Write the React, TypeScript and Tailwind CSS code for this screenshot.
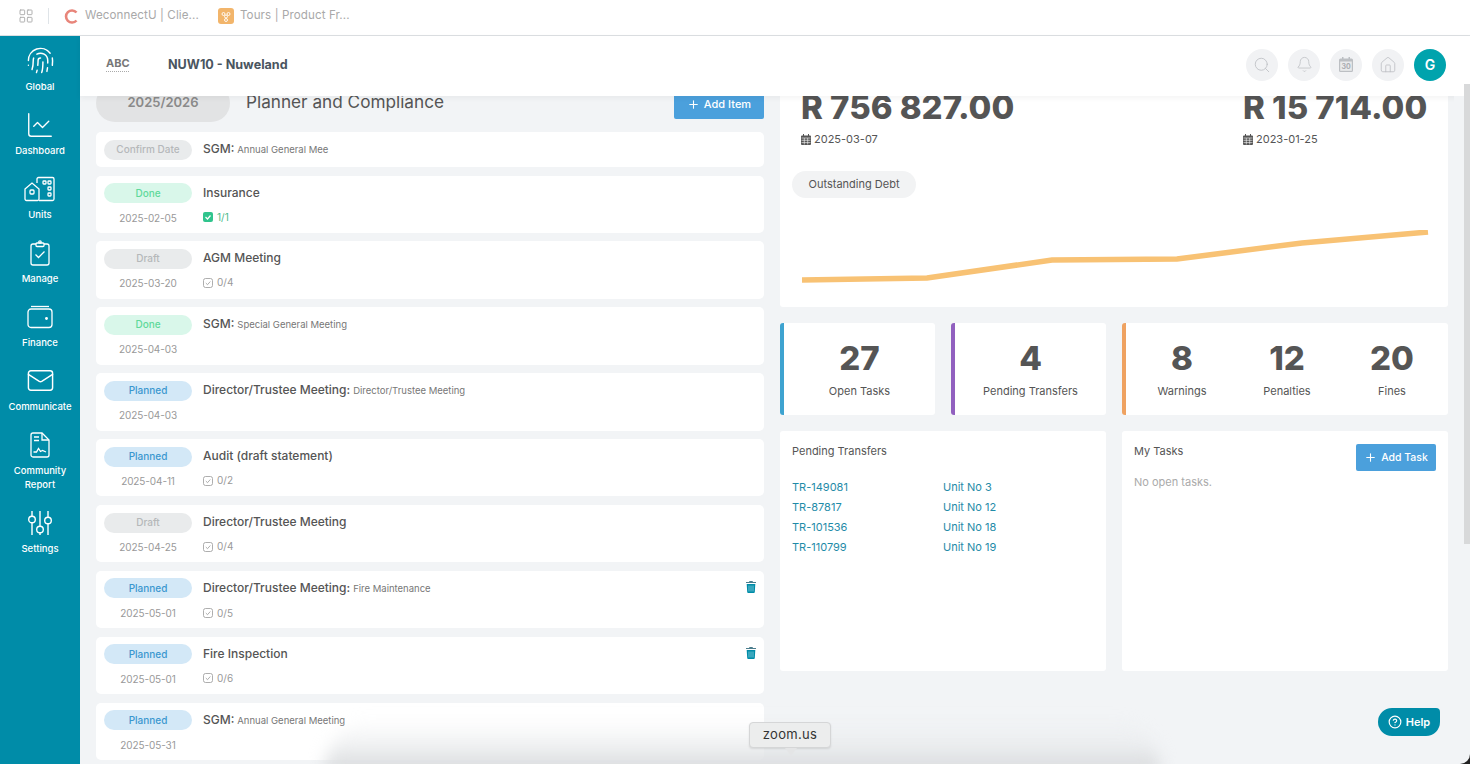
import { Plus, Search, Bell, Home, CircleHelp, LayoutGrid, Fingerprint, ChartLine, Mail } from "lucide-react";

function UnitsIcon() {
  return (
    <svg width="32" height="26" viewBox="0 0 32 26" fill="none" stroke="currentColor" strokeWidth="1.3">
      <path d="M1 13l7-6 7 6v10a1.5 1.5 0 0 1-1.5 1.5h-11A1.5 1.5 0 0 1 1 23z" />
      <rect x="6" y="14" width="4" height="4" rx="1" />
      <path d="M13 7V3a1.5 1.5 0 0 1 1.5-1.5h14A1.5 1.5 0 0 1 30 3v20a1.5 1.5 0 0 1-1.5 1.5H15" />
      <rect x="19" y="5" width="3" height="3" rx=".7" />
      <rect x="24" y="5" width="3" height="3" rx=".7" />
      <rect x="24" y="11" width="3" height="3" rx=".7" />
      <rect x="24" y="17" width="3" height="3" rx=".7" />
    </svg>
  );
}

function ManageIcon() {
  return (
    <svg width="20" height="26" viewBox="0 0 20 26" fill="none" stroke="currentColor" strokeWidth="1.3">
      <path d="M6 4H3a2 2 0 0 0-2 2v17a2 2 0 0 0 2 2h14a2 2 0 0 0 2-2V6a2 2 0 0 0-2-2h-3" />
      <rect x="6" y="3" width="8" height="3.5" rx="1" />
      <circle cx="10" cy="2" r="1.2" />
      <path d="M5.5 14.5l3 3 6-6" />
    </svg>
  );
}

function WalletIcon() {
  return (
    <svg width="26" height="24" viewBox="0 0 26 24" fill="none" stroke="currentColor" strokeWidth="1.3">
      <path d="M4 1.5h18" />
      <rect x="1" y="4" width="24" height="18.5" rx="3" />
      <circle cx="19.5" cy="13.5" r=".8" fill="currentColor" />
    </svg>
  );
}

function ReportIcon() {
  return (
    <svg width="20" height="26" viewBox="0 0 20 26" fill="none" stroke="currentColor" strokeWidth="1.3">
      <path d="M3 1h9l7 7v15a2 2 0 0 1-2 2H3a2 2 0 0 1-2-2V3a2 2 0 0 1 2-2z" />
      <path d="M12 1v7h7" />
      <path d="M4 5h5M4 8.500h5" />
      <path d="M3.500 20h3l2-3.500 2 3 2-1 3.500 1.500" />
    </svg>
  );
}

function SettingsIcon() {
  return (
    <svg width="24" height="26" viewBox="0 0 24 26" fill="none" stroke="currentColor" strokeWidth="1.4">
      <path d="M4 1v5M4 13v12M12 1v15M12 23v2M20 1v6M20 14v11" />
      <circle cx="4" cy="9.500" r="3.300" />
      <circle cx="12" cy="19.500" r="3.300" />
      <circle cx="20" cy="10.500" r="3.300" />
    </svg>
  );
}

function FilledCalendar() {
  return (
    <svg width="10" height="11" viewBox="0 0 10 11" className="shrink-0">
      <path fill="#555" d="M2 0h1v1.500h4V0h1v1.500h1a1 1 0 0 1 1 1V10a1 1 0 0 1-1 1H1a1 1 0 0 1-1-1V2.500a1 1 0 0 1 1-1h1z" />
      <path stroke="#fff" strokeWidth=".6" d="M.5 4h9M.5 6.300h9M.5 8.600h9M3.300 4v6.500M6.700 4v6.500" />
    </svg>
  );
}

function TrashIcon() {
  return (
    <svg width="10" height="12" viewBox="0 0 10 12" className="absolute right-[8px] top-[10px]">
      <path fill="#4b7d8d" d="M3.500 0h3l.5 1h3v1H0V1h3z" />
      <path fill="#008ca8" d="M.7 3h8.600l-.5 8a1 1 0 0 1-1 1H2.200a1 1 0 0 1-1-1z" />
      <path stroke="#8fd0de" strokeWidth=".8" d="M3 4.500v6M5 4.500v6M7 4.500v6" />
    </svg>
  );
}

const plannerRows = [
  { status: "Confirm Date", title: "SGM:", sub: "Annual General Mee", short: true },
  { status: "Done", title: "Insurance", date: "2025-02-05", tasks: "1/1", done: true },
  { status: "Draft", title: "AGM Meeting", date: "2025-03-20", tasks: "0/4" },
  { status: "Done", title: "SGM:", sub: "Special General Meeting", date: "2025-04-03" },
  { status: "Planned", title: "Director/Trustee Meeting:", sub: "Director/Trustee Meeting", date: "2025-04-03" },
  { status: "Planned", title: "Audit (draft statement)", date: "2025-04-11", tasks: "0/2" },
  { status: "Draft", title: "Director/Trustee Meeting", date: "2025-04-25", tasks: "0/4" },
  { status: "Planned", title: "Director/Trustee Meeting:", sub: "Fire Maintenance", date: "2025-05-01", tasks: "0/5", trash: true },
  { status: "Planned", title: "Fire Inspection", date: "2025-05-01", tasks: "0/6", trash: true },
  { status: "Planned", title: "SGM:", sub: "Annual General Meeting", date: "2025-05-31" },
];

const pillClass: Record<string, string> = {
  Done: "bg-[#d9f7ea] text-[#5fd99a]",
  Draft: "bg-[#e9ebec] text-[#b5b8ba]",
  "Confirm Date": "bg-[#e9ebec] text-[#b5b8ba]",
  Planned: "bg-[#d3e8f7] text-[#3a97cf]",
};

const transfers = [
  ["TR-149081", "Unit No 3"],
  ["TR-87817", "Unit No 12"],
  ["TR-101536", "Unit No 18"],
  ["TR-110799", "Unit No 19"],
];

const navItems = [
  { label: "Global", icon: <Fingerprint size={29} strokeWidth={1.2} /> },
  { label: "Dashboard", icon: <ChartLine size={30} strokeWidth={1.1} /> },
  { label: "Units", icon: <UnitsIcon /> },
  { label: "Manage", icon: <ManageIcon /> },
  { label: "Finance", icon: <WalletIcon /> },
  { label: "Communicate", icon: <Mail size={29} strokeWidth={1.2} /> },
  { label: "Community Report", icon: <ReportIcon /> },
  { label: "Settings", icon: <SettingsIcon /> },
];

export default function App() {
  return (
    <div className="relative flex h-[764px] w-[1470px] flex-col overflow-hidden bg-[#f2f4f6] font-['Inter','Liberation_Sans',sans-serif] text-[#555]">
      {/* browser bookmarks bar */}
      <div className="flex h-9 shrink-0 items-center border-b border-[#dcdfe2] bg-white pb-[3px] pl-[18px] text-[11.600px] tracking-[0.1px] text-[#a9a9a9]">
        <LayoutGrid size={16} strokeWidth={1.4} className="text-[#aaa]" />
        <div className="ml-[14px] mr-[15px] h-4 w-px bg-[#dfe4e8]" />
        <svg width="14" height="15" viewBox="0 0 14 15" fill="none" className="mr-[7px]">
          <path d="M12.500 3.500A6 6 0 1 0 12.500 11.500" stroke="#e8857a" strokeWidth="2.600" />
        </svg>
        <span>WeconnectU | Clie...</span>
        <span className="ml-[19px] mr-[6px] flex h-4 w-4 items-center justify-center rounded-[3px] bg-[#f2b56b]">
          <svg width="10" height="11" viewBox="0 0 10 11" fill="none" stroke="#fff" strokeWidth=".9">
            <circle cx="2.500" cy="3" r="1.500" />
            <circle cx="7.500" cy="3" r="1.500" />
            <circle cx="5" cy="5.500" r="1.500" />
            <circle cx="5" cy="9" r="1.500" />
          </svg>
        </span>
        <span>Tours | Product Fr...</span>
      </div>

      <div className="flex min-h-0 flex-1">
        {/* sidebar */}
        <aside className="flex w-20 shrink-0 flex-col items-center bg-[#008ca8] pt-[11.500px] text-white">
          {navItems.map((item) => (
            <div
              key={item.label}
              className={`mb-[14px] flex w-full flex-col items-center text-center text-[9.500px] font-medium leading-[14px] ${item.label === "Community Report" ? "h-[64px]" : "h-[50px]"}`}
            >
              <div className="flex h-[26px] items-center">{item.icon}</div>
              <span className="mt-[6px] w-[70px]">{item.label}</span>
            </div>
          ))}
        </aside>

        <div className="relative min-w-0 flex-1">
          {/* app header */}
          <header className="absolute left-0 right-0 top-0 z-10 flex h-[60px] items-center bg-white pb-[3px] pl-[26px] pr-[24px] shadow-[0_2px_6px_rgba(0,0,0,0.05)]">
            <div className="flex w-[62px] flex-col">
              <span className="text-[11px] font-bold leading-none text-[#777]">ABC</span>
              <span className="mt-[2px] w-[23px] border-b border-dotted border-[#aaa]" />
            </div>
            <div className="mt-[1px] text-[12.600px] font-bold text-[#4a5560]">NUW10 - Nuweland</div>
            <div className="ml-auto flex items-center gap-[10px] text-[#bcbfc3]">
              <div className="flex h-8 w-8 items-center justify-center rounded-full bg-[#f1f2f4]"><Search size={18} strokeWidth={1.1} /></div>
              <div className="flex h-8 w-8 items-center justify-center rounded-full bg-[#f1f2f4]"><Bell size={17} strokeWidth={1.1} /></div>
              <div className="flex h-8 w-8 items-center justify-center rounded-full bg-[#f1f2f4]">
                <svg width="14" height="15" viewBox="0 0 14 15">
                  <path fill="#bcbfc3" d="M3 0h1.500v1.500h5V0H11v1.500h1.500A1.500 1.500 0 0 1 14 3v10.500a1.500 1.500 0 0 1-1.500 1.500h-11A1.500 1.500 0 0 1 0 13.500V3a1.500 1.500 0 0 1 1.500-1.500H3z" />
                  <rect x="1.200" y="4.500" width="11.600" height="9.300" fill="#e9eaec" />
                  <text x="7" y="12.200" textAnchor="middle" fontSize="7" fontWeight="700" fill="#aaadb1">30</text>
                </svg>
              </div>
              <div className="flex h-8 w-8 items-center justify-center rounded-full bg-[#f1f2f4]"><Home size={18} strokeWidth={1.1} /></div>
              <div className="flex h-8 w-8 items-center justify-center rounded-full bg-[#00a3ad] text-[14px] font-semibold text-white">G</div>
            </div>
          </header>

          <div className="flex h-full gap-4 overflow-hidden pl-4 pr-[22px]">
            {/* planner column */}
            <div className="w-[668px] shrink-0 pt-[55px]">
              <div className="mb-[18px] flex h-[23px] items-center">
                <div className="flex h-[38px] w-[134px] items-center justify-center rounded-full bg-[#e2e3e4] text-[13px] font-semibold text-[#8a8a8a]">2025/2026</div>
                <div className="mb-[2px] ml-4 text-[17.200px] text-[#555]">Planner and Compliance</div>
                <button className="ml-auto flex h-[33px] w-[90px] items-center justify-center gap-1 rounded-[2px] bg-[#4ba0dc] pt-[3px] text-[11px] font-medium text-white">
                  <Plus size={13} />
                  Add Item
                </button>
              </div>
              <div className="flex flex-col gap-[8.600px]">
                {plannerRows.map((row, i) => (
                  <div key={i} className={`relative flex rounded-[5px] bg-white px-2 ${row.short ? "h-[35px]" : "h-[57.300px]"}`}>
                    <div className="flex w-[88px] shrink-0 flex-col items-center pt-[7.500px]">
                      <div className={`flex h-5 w-[88px] items-center justify-center rounded-full text-[10px] font-medium ${pillClass[row.status]}`}>{row.status}</div>
                      {row.date && <div className="mt-[7.500px] text-[10px] tracking-[-0.1px] text-[#999]">{row.date}</div>}
                    </div>
                    <div className="ml-[11px] pt-[8px]">
                      <div className="text-[12px] font-medium leading-[18px] text-[#555]">
                        {row.title}
                        {row.sub && <span className="ml-[3px] text-[9.500px] font-normal text-[#777]">{row.sub}</span>}
                      </div>
                      {row.tasks && (
                        <div className={`mt-[8px] flex items-center gap-1 text-[10px] ${row.done ? "text-[#4cb98a]" : "text-[#999]"}`}>
                          {row.done ? (
                            <svg width="10" height="10" viewBox="0 0 10 10">
                              <rect width="10" height="10" rx="2" fill="#30c48d" />
                              <path d="M2.500 5l2 2 3-3.500" fill="none" stroke="#fff" strokeWidth="1.200" />
                            </svg>
                          ) : (
                            <svg width="10" height="10" viewBox="0 0 10 10" fill="none" stroke="#999" strokeWidth=".8">
                              <rect x=".5" y=".5" width="9" height="9" rx="2" />
                              <path d="M2.800 5l1.700 1.700 2.800-3.200" />
                            </svg>
                          )}
                          {row.tasks}
                        </div>
                      )}
                    </div>
                    {row.trash && <TrashIcon />}
                  </div>
                ))}
              </div>
            </div>

            {/* right column */}
            <div className="w-[668px] shrink-0">
              <div className="relative h-[271px] rounded-[3px] bg-white pl-[21px] pr-[20px] pt-[55px]">
                <div className="flex justify-between">
                  <div>
                    <div className="text-[33px] font-extrabold leading-none text-[#555]">R 756 827.00</div>
                    <div className="mt-[7px] flex items-center gap-[3px] text-[11px] text-[#555]">
                      <FilledCalendar />
                      2025-03-07
                    </div>
                  </div>
                  <div className="w-[185px]">
                    <div className="text-[33px] font-extrabold leading-none text-[#555]">R 15 714.00</div>
                    <div className="mt-[7px] flex items-center gap-[3px] text-[11px] text-[#555]">
                      <FilledCalendar />
                      2023-01-25
                    </div>
                  </div>
                </div>
                <div className="ml-[-9px] mt-[23px] flex h-[27px] w-[124px] items-center justify-center rounded-full bg-[#f2f3f4] text-[11px]">Outstanding Debt</div>
                <svg className="absolute bottom-[21px] left-[21px]" width="628" height="56" viewBox="0 0 628 56" fill="none">
                  <path d="M1 50L126 48L251 30L376 29L501 13L627 2" stroke="#f8c274" strokeWidth="5.500" />
                </svg>
              </div>

              <div className="mt-4 flex gap-4">
                <div className="flex h-[92px] w-[155px] flex-col items-center justify-center rounded-[3px] border-l-4 border-[#3ea3d0] bg-white pt-[1px]">
                  <div className="text-[33px] font-extrabold leading-[38px]">27</div>
                  <div className="mt-[6px] text-[11px]">Open Tasks</div>
                </div>
                <div className="flex h-[92px] w-[155px] flex-col items-center justify-center rounded-[3px] border-l-4 border-[#9160bf] bg-white pt-[1px]">
                  <div className="text-[33px] font-extrabold leading-[38px]">4</div>
                  <div className="mt-[6px] text-[11px]">Pending Transfers</div>
                </div>
                <div className="flex h-[92px] flex-1 items-center justify-center rounded-[3px] border-l-4 border-[#efa261] bg-white pt-[1px]">
                  {[["8", "Warnings"], ["12", "Penalties"], ["20", "Fines"]].map(([num, label]) => (
                    <div key={label} className="flex w-[105px] flex-col items-center">
                      <div className="text-[33px] font-extrabold leading-[38px]">{num}</div>
                      <div className="mt-[6px] text-[11px]">{label}</div>
                    </div>
                  ))}
                </div>
              </div>

              <div className="mt-4 flex gap-4">
                <div className="h-[240px] w-[326px] rounded-[3px] bg-white p-3 pt-[13px]">
                  <div className="text-[11px] leading-[14px]">Pending Transfers</div>
                  <div className="mt-[19px] flex flex-col">
                    {transfers.map(([id, unit]) => (
                      <div key={id} className="flex h-5 items-center text-[11px] text-[#1f8ba8]">
                        <span className="w-[151px]">{id}</span>
                        <span>{unit}</span>
                      </div>
                    ))}
                  </div>
                </div>
                <div className="relative h-[240px] w-[326px] rounded-[3px] bg-white p-3 pt-[13px]">
                  <div className="text-[11px] leading-[14px]">My Tasks</div>
                  <button className="absolute right-3 top-[13px] flex h-[27px] w-[80px] items-center justify-center gap-1 rounded-[2px] bg-[#4ba0dc] text-[10.500px] font-medium text-white">
                    <Plus size={13} />
                    Add Task
                  </button>
                  <div className="mt-[16px] text-[11px] text-[#aaa]">No open tasks.</div>
                </div>
              </div>
            </div>
          </div>

          {/* page scrollbar */}
          <div className="absolute bottom-0 right-0 top-[60px] z-10 w-4 bg-[#f2f4f6]">
            <div className="ml-auto mt-[-12px] h-[460px] w-[6px] bg-[#d8d9da]" />
          </div>
        </div>
      </div>

      {/* help button */}
      <button className="absolute bottom-[28px] left-[1378px] z-20 flex h-[28px] w-[62px] items-center justify-center gap-1 rounded-[14px] rounded-tr-[4px] bg-[#008ca8] text-[11px] font-semibold text-white">
        <CircleHelp size={14} />
        Help
      </button>

      {/* dock shadow at bottom */}
      <div className="absolute bottom-[-10px] left-[325px] z-20 h-[54px] w-[835px] rounded-t-[50px] bg-gradient-to-b from-[#f2f4f6]/0 via-[#e8eaec]/70 to-[#d4d6d8] blur-[8px]" />

      {/* zoom.us dock tooltip */}
      <div className="absolute bottom-[16px] left-[749px] z-30 flex h-[26px] w-[82px] items-center justify-center rounded-[4px] border border-[#d5d6d7] bg-[#eceded] text-[13px] tracking-[0.3px] text-[#333] shadow-[0_1px_2px_rgba(0,0,0,0.1)]">
        zoom.us
      </div>
      <div className="absolute bottom-[8px] left-[785px] z-30 h-0 w-0 border-x-[6px] border-t-[8px] border-x-transparent border-t-[#e4e5e6]" />

      {/* window corner */}
      <div className="absolute bottom-0 right-0 z-30 h-3 w-3 bg-[#222]">
        <div className="h-full w-full rounded-br-[10px] bg-[#f2f4f6]" />
      </div>
    </div>
  );
}
